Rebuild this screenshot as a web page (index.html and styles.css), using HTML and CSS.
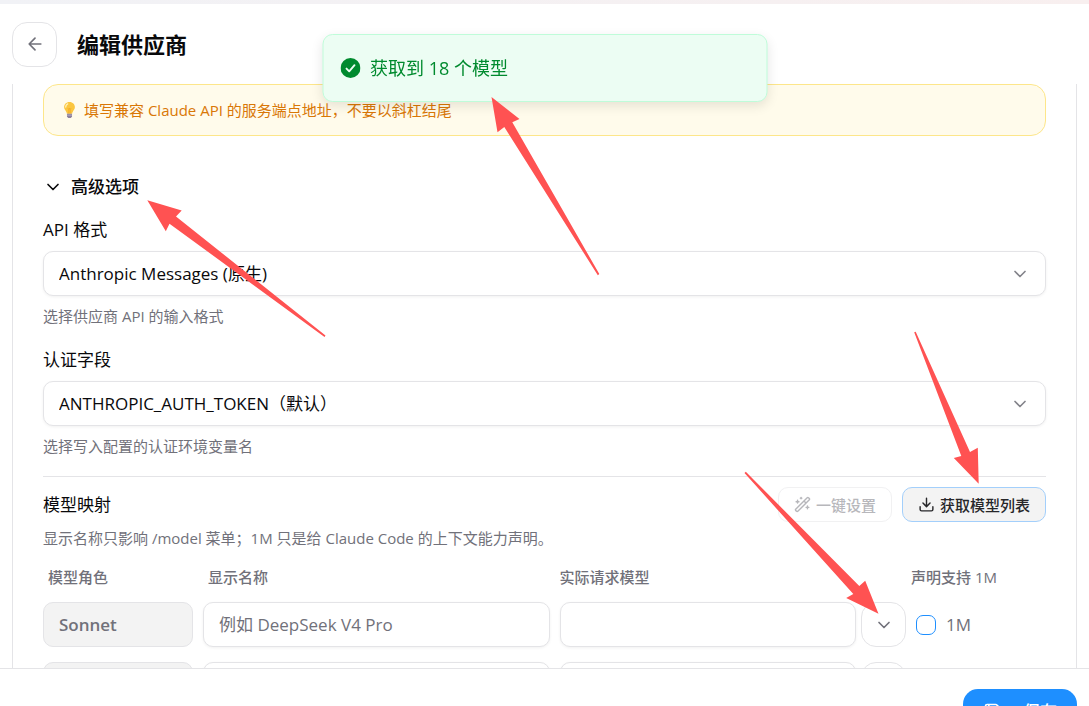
FILE: index.html
```html
<!DOCTYPE html>
<html lang="zh-CN">
<head>
<meta charset="utf-8">
<meta name="viewport" content="width=device-width, initial-scale=1">
<title>编辑供应商</title>
<link rel="stylesheet" href="styles.css">
</head>
<body>
<div class="app">
  <div class="window-strip"></div>
  <header class="header">
    <button class="icon-button" type="button" aria-label="返回">
      <svg class="icon" viewBox="0 0 24 24"><path d="m12 19-7-7 7-7M19 12H5"/></svg>
    </button>
    <h1 class="title">编辑供应商</h1>
  </header>

  <main class="scroller">
    <form class="card" id="provider">
      <p class="notice">
        <svg class="bulb" viewBox="0 0 16 20" aria-hidden="true">
          <path d="M8 1C4.400 1 2 3.600 2 6.800c0 2.400 1.400 3.600 2.300 5.100.5.900.7 1.600.8 2.300h5.800c.1-.7.3-1.400.8-2.300.9-1.500 2.300-2.700 2.300-5.100C14 3.600 11.600 1 8 1z" fill="#fbc63f"/>
          <path d="M6 3.200c-1.500.8-2.200 2-2.200 3.600" fill="none" stroke="#fff0b8" stroke-width="1.500" stroke-linecap="round"/>
          <path d="M6.200 8l1 1.200L8 8l.8 1.200 1-1.200M7.200 9.200v4.800M8.800 9.200v4.800" fill="none" stroke="#f4a11c" stroke-width=".7"/>
          <path d="M5.200 14.200h5.600v3.300L9.300 19H6.700l-1.500-1.500z" fill="#8c7f9c"/>
          <path d="M5.200 15.700h5.600" stroke="#c6bdd0" stroke-width=".8"/>
        </svg>
        <span>填写兼容 Claude API 的服务端点地址，不要以斜杠结尾</span>
      </p>

      <button class="disclosure" type="button" aria-expanded="true">
        <svg class="icon" viewBox="0 0 24 24"><path d="m6 9 6 6 6-6"/></svg>
        高级选项
      </button>

      <div class="fields">
        <div class="field">
          <label class="label" for="api-format">API 格式</label>
          <div class="select-box">
            <select class="control select" id="api-format"><option>Anthropic Messages (原生)</option></select>
            <svg class="icon select-arrow" viewBox="0 0 24 24"><path d="m6 9 6 6 6-6"/></svg>
          </div>
          <p class="hint">选择供应商 API 的输入格式</p>
        </div>

        <div class="field">
          <label class="label" for="auth-field">认证字段</label>
          <div class="select-box">
            <select class="control select" id="auth-field"><option>ANTHROPIC_AUTH_TOKEN（默认）</option></select>
            <svg class="icon select-arrow" viewBox="0 0 24 24"><path d="m6 9 6 6 6-6"/></svg>
          </div>
          <p class="hint">选择写入配置的认证环境变量名</p>
        </div>
      </div>

      <section class="mapping">
        <div class="mapping-head">
          <h2 class="label">模型映射</h2>
          <div class="actions">
            <button class="small-button" type="button" disabled>
              <svg class="icon small-icon" viewBox="0 0 24 24"><path d="m21.640 3.640-1.280-1.280a1.210 1.210 0 0 0-1.720 0L2.360 18.640a1.210 1.210 0 0 0 0 1.720l1.280 1.280a1.200 1.200 0 0 0 1.720 0L21.640 5.360a1.200 1.200 0 0 0 0-1.720M14 7l3 3M5 6v4M19 14v4M10 2v2M7 8H3M21 16h-4M11 3H9"/></svg>
              一键设置
            </button>
            <button class="small-button active" type="button">
              <svg class="icon small-icon" viewBox="0 0 24 24"><path d="M12 15V3M21 15v4a2 2 0 0 1-2 2H5a2 2 0 0 1-2-2v-4M7 10l5 5 5-5"/></svg>
              获取模型列表
            </button>
          </div>
        </div>
        <p class="hint">显示名称只影响 /model 菜单；1M 只是给 Claude Code 的上下文能力声明。</p>

        <div class="grid grid-head">
          <span>模型角色</span>
          <span id="col-name">显示名称</span>
          <span id="col-model">实际请求模型</span>
          <span>声明支持 1M</span>
        </div>
        <div class="grid">
          <div class="role">Sonnet</div>
          <input class="control" type="text" placeholder="例如 DeepSeek V4 Pro" aria-labelledby="col-name">
          <div class="model">
            <input class="control" type="text" aria-labelledby="col-model">
            <button class="icon-button" type="button" aria-label="选择模型">
              <svg class="icon" viewBox="0 0 24 24"><path d="m6 9 6 6 6-6"/></svg>
            </button>
          </div>
          <label class="check"><input class="checkbox" type="checkbox">1M</label>
        </div>
        <div class="grid">
          <div class="role"></div>
          <input class="control" type="text" aria-labelledby="col-name">
          <div class="model">
            <input class="control" type="text" aria-labelledby="col-model">
            <button class="icon-button" type="button" aria-label="选择模型"></button>
          </div>
        </div>
      </section>
    </form>
  </main>

  <footer class="footer">
    <button class="save" type="submit" form="provider">
      <svg class="icon" viewBox="0 0 24 24"><path d="M15.200 3a2 2 0 0 1 1.400.6l3.800 3.800a2 2 0 0 1 .6 1.400V19a2 2 0 0 1-2 2H5a2 2 0 0 1-2-2V5a2 2 0 0 1 2-2zM17 21v-7a1 1 0 0 0-1-1H8a1 1 0 0 0-1 1v7M7 3v4a1 1 0 0 0 1 1h7"/></svg>
      保存
    </button>
  </footer>
</div>

<div class="toast" role="status">
  <svg class="toast-icon" viewBox="0 0 20 20" aria-hidden="true"><circle cx="10" cy="10" r="10" fill="#008a2e"/><path d="m6 10.600 2.700 2.700L14 7.200" fill="none" stroke="#ecfdf3" stroke-width="1.900" stroke-linecap="round" stroke-linejoin="round"/></svg>
  获取到 18 个模型
</div>

<svg class="arrows" width="1089" height="706" viewBox="0 0 1089 706" aria-hidden="true">
  <path d="M491.500 97 519.500 119 512.300 122.300 599.300 274 597.800 275.200 504.300 127 497.500 132.300z"/>
  <path d="M147.300 200.300 181.700 210.500 176 216.500 325.500 335.500 324.500 337 169.500 223.700 165.800 231.300z"/>
  <path d="M978.700 483.700 953.800 458 961.300 456 914.200 332.300 915.700 331.700 970 452 977.800 447.800z"/>
  <path d="M878.500 613.700 846.200 598 853.300 594 744.500 473 745.800 471.800 859.300 586 865.200 580.700z"/>
</svg>
</body>
</html>
```
FILE: styles.css
```css
* {
  box-sizing: border-box;
}

body {
  margin: 0;
  height: 100vh;
  overflow: hidden;
  background: #fff;
  color: #09090b;
  font-family: "Open Sans", "Noto Sans CJK SC", sans-serif;
  font-size: 17px;
  line-height: 24px;
}

h1, h2, p {
  margin: 0;
}

button, input, select {
  margin: 0;
  font: inherit;
  color: inherit;
}

/* The footer runs past the lower edge of the window. */
.app {
  display: flex;
  flex-direction: column;
  height: calc(100vh + 48px);
}

.window-strip {
  flex: none;
  height: 4px;
  background: linear-gradient(90deg, #f1f2f6, #f8efef);
}

.header {
  flex: none;
  display: flex;
  align-items: center;
  gap: 20px;
  height: 80px;
  padding: 0 12px;
}

.title {
  font-size: 22px;
  line-height: 32px;
  font-weight: 600;
}

.icon {
  flex: none;
  width: 20px;
  height: 20px;
  fill: none;
  stroke: currentColor;
  stroke-width: 2;
  stroke-linecap: round;
  stroke-linejoin: round;
}

.icon-button {
  flex: none;
  display: flex;
  align-items: center;
  justify-content: center;
  width: 45px;
  height: 45px;
  padding: 0;
  border: 1px solid #e4e4e7;
  border-radius: 15px;
  background: #fff;
  color: #71717a;
}

.scroller {
  flex: 1;
  min-height: 0;
  overflow: hidden;
}

.card {
  margin: 0 12px;
  padding: 0 30px;
  border: solid #e4e4e7;
  border-width: 0 1px;
}

.notice {
  display: flex;
  align-items: center;
  gap: 7px;
  height: 52px;
  padding: 0 18px;
  border: 1px solid #fde68a;
  border-radius: 15px;
  background: #fffbeb;
  color: #d97706;
  font-size: 15px;
}

.bulb {
  width: 15px;
  height: 18px;
}

.disclosure {
  display: flex;
  align-items: center;
  gap: 8px;
  margin: 39px 0 20px;
  padding: 0;
  border: 0;
  background: none;
  font-weight: 500;
}

.fields {
  display: flex;
  flex-direction: column;
  gap: 23px;
  margin-bottom: 20px;
}

.field {
  display: flex;
  flex-direction: column;
  gap: 10px;
}

.label {
  font-size: 17px;
  line-height: 22px;
  font-weight: 400;
}

.hint {
  color: #71717a;
  font-size: 15px;
  line-height: 20px;
}

.select-box {
  display: grid;
  align-items: center;
}

.select-box > * {
  grid-area: 1 / 1;
}

.select-arrow {
  justify-self: end;
  margin-right: 16px;
  color: #83838a;
  pointer-events: none;
}

.control {
  width: 100%;
  min-width: 0;
  height: 45px;
  padding: 0 15px;
  border: 1px solid #e4e4e7;
  border-radius: 10px;
  background: #fff;
  box-shadow: 0 1px 3px rgba(0, 0, 0, 0.06);
}

.control::placeholder {
  color: #71717a;
  opacity: 1;
}

.select {
  appearance: none;
}

.mapping {
  padding-top: 10px;
  border-top: 1px solid #e4e4e7;
}

.mapping-head {
  display: flex;
  align-items: center;
  justify-content: space-between;
  margin-bottom: 6px;
}

.actions {
  display: flex;
  gap: 10px;
}

.small-button {
  display: flex;
  align-items: center;
  gap: 5px;
  height: 35px;
  padding: 0 15px;
  border: 1px solid #e4e4e7;
  border-radius: 10px;
  background: #fff;
  color: #27272a;
  font-size: 15px;
  font-weight: 500;
}

.small-button:disabled {
  color: #71717a;
  opacity: 0.5;
}

.small-button.active {
  border-color: #a3cffb;
  background: #f3f3f3;
}

.small-icon {
  width: 17px;
  height: 17px;
}

.grid {
  display: grid;
  grid-template-columns: 150px 1fr 1fr 130px;
  align-items: center;
  gap: 10px;
  margin-bottom: 15px;
}

.grid-head {
  margin-top: 19px;
  padding: 0 5px;
  color: #71717a;
  font-size: 15px;
  line-height: 20px;
  font-weight: 500;
}

.role {
  display: flex;
  align-items: center;
  height: 45px;
  padding: 0 15px;
  border: 1px solid #e4e4e7;
  border-radius: 10px;
  background: #f3f3f3;
  color: #71717a;
  font-weight: 600;
}

.model {
  display: flex;
  gap: 5px;
}

.check {
  display: flex;
  align-items: center;
  gap: 10px;
  color: #71717a;
}

.checkbox {
  appearance: none;
  width: 20px;
  height: 20px;
  border: 1px solid #1e8fff;
  border-radius: 7px;
  background: #fff;
}

.footer {
  flex: none;
  display: flex;
  justify-content: flex-end;
  padding: 20px 12px;
  border-top: 1px solid #e4e4e7;
  background: #fff;
}

.save {
  display: flex;
  align-items: center;
  gap: 20px;
  height: 45px;
  padding: 0 20px;
  border: 0;
  border-radius: 15px;
  background: #1e8fff;
  color: #fff;
  font-weight: 500;
}

.toast {
  position: fixed;
  top: 34px;
  left: 50%;
  display: flex;
  align-items: center;
  gap: 10px;
  width: 445px;
  height: 68px;
  padding: 0 17px;
  transform: translateX(-50%);
  border: 1px solid #bffcd9;
  border-radius: 10px;
  background: #ecfdf3;
  box-shadow: 0 4px 12px rgba(0, 0, 0, 0.1);
  color: #008a2e;
  font-size: 18px;
}

.toast-icon {
  width: 20px;
  height: 20px;
}

.arrows {
  position: fixed;
  top: 0;
  left: 0;
  fill: #ff5252;
  pointer-events: none;
}
```
